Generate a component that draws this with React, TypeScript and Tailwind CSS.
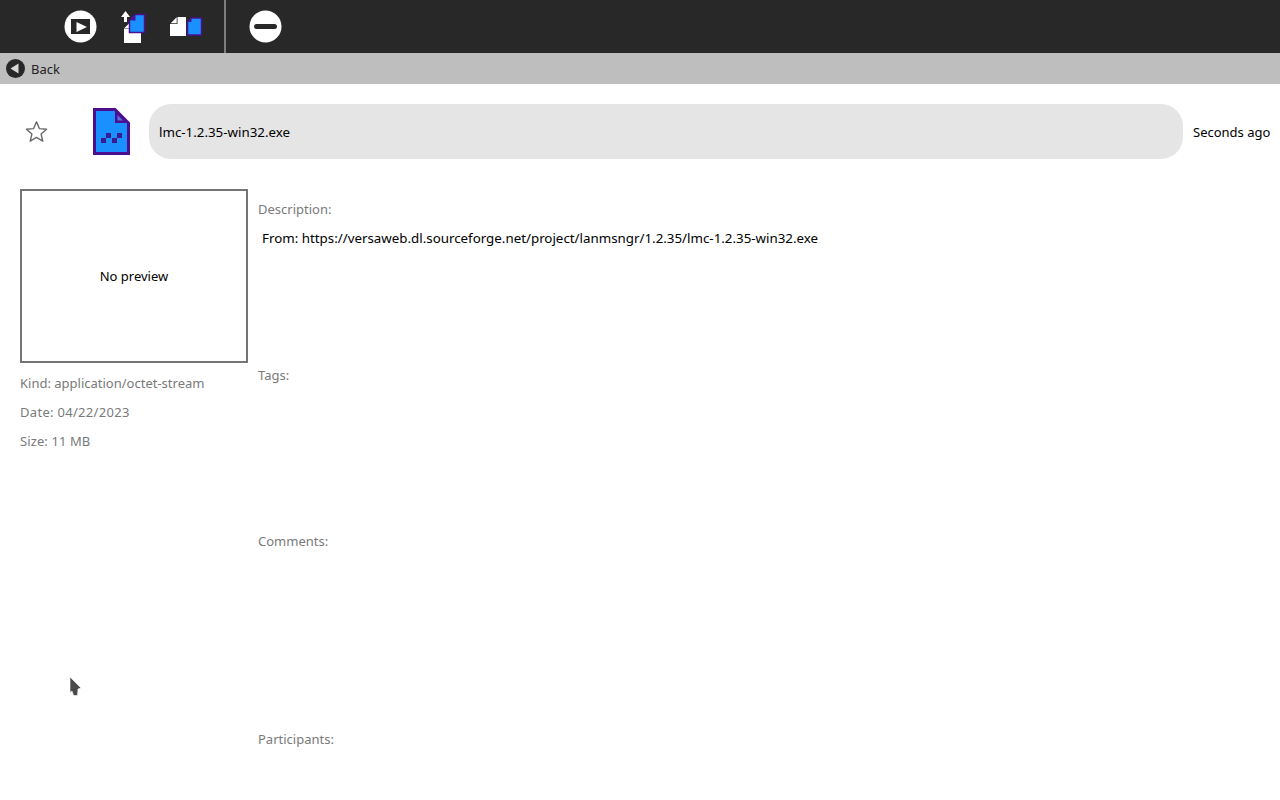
import React from "react";

function PlayIcon() {
  return (
    <svg width="33" height="33" viewBox="0 0 33 33">
      <circle cx="16.5" cy="16.5" r="16" fill="#fff" />
      <rect x="7" y="9" width="19" height="15" fill="#282828" />
      <path d="M12.5 12 L23 17 L12.5 22 Z" fill="#fff" />
    </svg>
  );
}

function MinusIcon() {
  return (
    <svg width="33" height="33" viewBox="0 0 33 33">
      <circle cx="16.5" cy="16.5" r="16" fill="#fff" />
      <rect x="5" y="14" width="23" height="5" rx="2.5" fill="#282828" />
    </svg>
  );
}

function SmallBlueDoc({ x, y, w, h, f }: { x: number; y: number; w: number; h: number; f: number }) {
  return (
    <g>
      <path
        d={`M${x} ${y + f} L${x + f} ${y} H${x + w} V${y + h} H${x} Z`}
        fill="#1a90ff"
        stroke="#4b0f8f"
        strokeWidth="1.5"
      />
      <path d={`M${x + 1} ${y + f} H${x + f} V${y + 1} Z`} fill="#4b0f8f" />
    </g>
  );
}

function UploadDocs() {
  return (
    <svg width="30" height="34" viewBox="0 0 30 34">
      <path d="M3.5 18 L8 13.5 V18 Z" fill="#fff" />
      <rect x="3" y="18.5" width="17" height="14.5" fill="#fff" />
      <path d="M4.5 1 L0 7 H3 V12 H6 V7 H9 Z" fill="#fff" />
      <SmallBlueDoc x={8.5} y={4.5} w={15} h={18} f={6} />
    </svg>
  );
}

function CopyDocs() {
  return (
    <svg width="34" height="23" viewBox="0 0 34 23">
      <path d="M0.7 8.3 L6.7 2.3 V8.3 Z" fill="#fff" />
      <path d="M7.5 2 H16 V21 H0 V9 H7.5 Z" fill="#fff" />
      <SmallBlueDoc x={17.5} y={3} w={14} h={17} f={4} />
    </svg>
  );
}

function BigFile() {
  return (
    <svg width="37" height="47" viewBox="0 0 37 47">
      <path d="M1.5 1.5 H22 L35.5 15 V45.5 H1.5 Z" fill="#1a90ff" stroke="#4b0f8f" strokeWidth="3" />
      <path d="M22 3 V15 H34 Z" fill="#4b0f8f" />
      <path d="M24.5 7 V12.5 H30 Z" fill="#5b6fe0" />
      <rect x="13" y="25" width="5" height="5" fill="#3a1a8f" />
      <rect x="24" y="25" width="5" height="5" fill="#3a1a8f" />
      <rect x="8" y="30" width="5" height="5" fill="#3a1a8f" />
      <rect x="19" y="30" width="5" height="5" fill="#3a1a8f" />
    </svg>
  );
}

function Label({ children, className }: { children: React.ReactNode; className?: string }) {
  return <div className={`text-[13px] leading-[18px] text-[#7a7a7a] ${className ?? ""}`}>{children}</div>;
}

export default function App() {
  return (
    <div className="relative h-[800px] w-[1280px] overflow-hidden bg-white font-['Noto_Sans',sans-serif] text-[13px] text-black">
      <header className="flex h-[53px] items-center bg-[#282828]">
        <div className="ml-[64px] flex w-[33px] justify-center">
          <PlayIcon />
        </div>
        <div className="ml-[24px] flex w-[30px] justify-center">
          <UploadDocs />
        </div>
        <div className="ml-[19px] flex w-[34px] justify-center">
          <CopyDocs />
        </div>
        <div className="ml-[20px] h-full w-[2px] bg-[#7d7d7d]" />
        <div className="ml-[23px]">
          <MinusIcon />
        </div>
      </header>

      <div className="flex h-[31px] items-center bg-[#bebebe] pl-[6px]">
        <svg width="19" height="19" viewBox="0 0 19 19">
          <circle cx="9.5" cy="9.5" r="9.5" fill="#282828" />
          <path d="M4.5 9.5 L12.5 4.5 V14.5 Z" fill="#d8d8d8" />
        </svg>
        <span className="ml-[6px] pt-[2px] text-[13px] text-[#222]">Back</span>
      </div>

      <div className="flex h-[105px] items-start">
        <div className="ml-[25px] mt-[36px] w-[23px]">
          <svg width="23" height="23" viewBox="0 0 23 23">
            <path
              d="M11.5 1.8 L14.4 8.6 L21.6 9.2 L16.1 14 L17.8 21.2 L11.5 17.4 L5.2 21.2 L6.9 14 L1.4 9.2 L8.6 8.6 Z"
              fill="none"
              stroke="#6a6a6a"
              strokeWidth="1.4"
              strokeLinejoin="round"
            />
          </svg>
        </div>
        <div className="ml-[45px] mt-[24px]">
          <BigFile />
        </div>
        <div className="ml-[19px] mt-[20px] flex h-[55px] w-[1034px] items-center rounded-[22px] bg-[#e5e5e5] pl-[10px] pt-[2px] text-[13.33px]">
          lmc-1.2.35-win32.exe
        </div>
        <div className="ml-[10px] mt-[38px] whitespace-nowrap leading-[20px]">Seconds ago</div>
      </div>

      <div className="flex pl-[20px]">
        <div className="w-[228px]">
          <div className="flex h-[174px] items-center justify-center border-2 border-[#757575] pt-[1px]">No preview</div>
          <Label className="mt-[11px]">Kind: application/octet-stream</Label>
          <Label className="mt-[11px] tracking-[0.3px]">Date: 04/22/2023</Label>
          <Label className="mt-[11px] tracking-[0.1px]">Size: 11 MB</Label>
        </div>
        <div className="ml-[10px] flex-1">
          <Label className="mt-[11px]">Description:</Label>
          <div className="ml-[4px] mt-[11px] text-[13.33px] leading-[18px]">
            From: https://versaweb.dl.sourceforge.net/project/lanmsngr/1.2.35/lmc-1.2.35-win32.exe
          </div>
          <Label className="mt-[119px]">Tags:</Label>
          <Label className="mt-[148px]">Comments:</Label>
          <Label className="mt-[180px]">Participants:</Label>
        </div>
      </div>

      <svg className="absolute left-[69px] top-[676px]" width="13" height="21" viewBox="0 0 13 21">
        <path d="M1 1 L12 12 L9 13 L8.5 19.5 L4.5 19.5 L3 15 L1 16.5 Z" fill="#4a4a4a" stroke="#fff" strokeWidth="0.6" />
      </svg>
    </div>
  );
}
